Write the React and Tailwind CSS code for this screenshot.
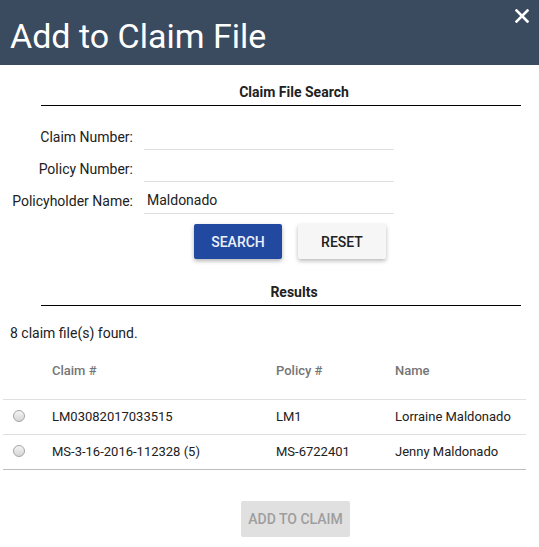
import { useState } from "react";

const rows = [
  { claim: "LM03082017033515", policy: "LM1", name: "Lorraine Maldonado" },
  { claim: "MS-3-16-2016-112328 (5)", policy: "MS-6722401", name: "Jenny Maldonado" },
];

const Field = ({ label, value }) => (
  <div className="flex items-end">
    <label className="w-[133px] pb-[3px] text-right text-sm leading-5">{label}</label>
    <div className="ml-[11px] h-[32px] w-[250px] border-b border-[#e0e0e0] pl-[3px] pb-[3px] flex items-end text-sm leading-5">
      {value}
    </div>
  </div>
);

const Radio = () => (
  <span className="block h-[12px] w-[12px] rounded-full border border-[#a6a6a6] bg-gradient-to-b from-[#f4f4f4] to-[#d6d6d6]" />
);

const SectionTitle = ({ children }) => (
  <div className="ml-[41px] w-[480px] border-b border-black pb-[3px] pl-[26px] text-center text-sm font-bold leading-5 text-[#212121]">
    {children}
  </div>
);

export default function App() {
  const [name] = useState("Maldonado");

  return (
    <div className="h-[547px] w-[539px] bg-white font-['Roboto',sans-serif] text-[#212121]">
      <header className="relative h-[65px] bg-[#3a4a5f] pl-[10px] pt-[19px]">
        <h1 className="text-[34px] font-normal leading-none text-white">Add to Claim File</h1>
        <button type="button" className="absolute right-[10px] top-[9px] text-white" aria-label="Close">
          <svg width="14" height="14" viewBox="0 0 14 14">
            <path d="M1.5 1.5 L12.5 12.5 M12.5 1.5 L1.5 12.5" stroke="white" strokeWidth="2.6" strokeLinecap="square" />
          </svg>
        </button>
      </header>

      <div className="pt-[17px]">
        <SectionTitle>Claim File Search</SectionTitle>
      </div>

      <div className="mt-[12px] flex flex-col">
        <Field label="Claim Number:" value="" />
        <Field label="Policy Number:" value="" />
        <Field label="Policyholder Name:" value={name} />
      </div>

      <div className="mt-[10px] flex gap-[16px] pl-[194px]">
        <button type="button" className="h-[35px] w-[88px] rounded-[2px] bg-[#2249a0] text-sm font-medium text-[#eef0f8] shadow-[0_2px_4px_rgba(0,0,0,0.3)]">
          SEARCH
        </button>
        <button type="button" className="h-[35px] w-[88px] rounded-[2px] bg-[#f6f6f6] text-sm font-medium text-[#212121] shadow-[0_2px_4px_rgba(0,0,0,0.28)]">
          RESET
        </button>
      </div>

      <div className="pt-[23px]">
        <SectionTitle>Results</SectionTitle>
      </div>

      <p className="mt-[17px] pl-[10px] text-sm leading-5">8 claim file(s) found.</p>

      <table className="ml-[3px] w-[523px] border-collapse text-[13px]">
        <thead>
          <tr className="h-[56px] border-b border-[#e0e0e0] text-left text-[#757575]">
            <th className="w-[49px]" />
            <th className="w-[224px] font-medium">Claim #</th>
            <th className="w-[119px] font-medium">Policy #</th>
            <th className="font-medium">Name</th>
          </tr>
        </thead>
        <tbody>
          {rows.map((r, i) => (
            <tr
              key={r.claim}
              className={`h-[35px] border-b ${i === rows.length - 1 ? "border-[#bdbdbd]" : "border-[#e0e0e0]"}`}
            >
              <td className="pl-[10px] pb-[2px]">
                <Radio />
              </td>
              <td>{r.claim}</td>
              <td>{r.policy}</td>
              <td>{r.name}</td>
            </tr>
          ))}
        </tbody>
      </table>

      <div className="mt-[31px] pl-[241px]">
        <button type="button" disabled className="h-[36px] w-[109px] rounded-[2px] bg-[#e0e0e0] text-sm font-medium text-[#9e9e9e]">
          ADD TO CLAIM
        </button>
      </div>
    </div>
  );
}
